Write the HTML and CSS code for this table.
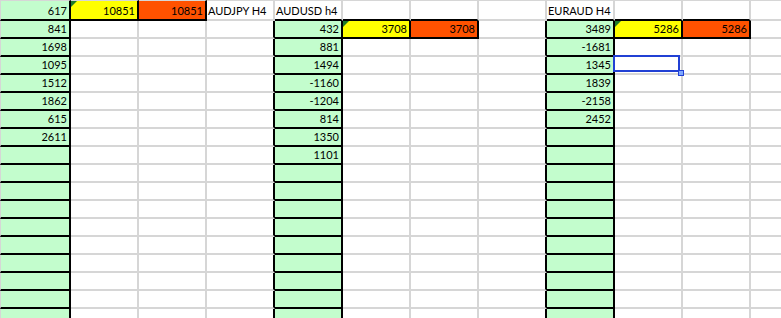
FILE: index.html
```html
<!DOCTYPE html>
<html>
<head>
<meta charset="utf-8">
<link rel="stylesheet" href="styles.css">
</head>
<body>
<div class="sheet">
  <!-- row 1 -->
  <div class="c g">617</div>
  <div class="c y tri bk">10851</div>
  <div class="c o bk">10851</div>
  <div class="c t">AUDJPY H4</div>
  <div class="c t bb">AUDUSD h4</div>
  <div class="c bb"></div>
  <div class="c bb"></div>
  <div class="c"></div>
  <div class="c t bb">EURAUD H4</div>
  <div class="c bb"></div>
  <div class="c bb"></div>
  <div class="c"></div>
  <!-- row 2 -->
  <div class="c g">841</div>
  <div class="c"></div><div class="c"></div>
  <div class="c br"></div>
  <div class="c g">432</div>
  <div class="c y tri bk">3708</div>
  <div class="c o bk">3708</div>
  <div class="c br"></div>
  <div class="c g">3489</div>
  <div class="c y tri bk">5286</div>
  <div class="c o bk">5286</div>
  <div class="c"></div>
  <!-- row 3 -->
  <div class="c g">1698</div>
  <div class="c"></div><div class="c"></div><div class="c br"></div>
  <div class="c g">881</div>
  <div class="c"></div><div class="c"></div><div class="c br"></div>
  <div class="c g">-1681</div>
  <div class="c"></div><div class="c"></div><div class="c"></div>
  <!-- row 4 -->
  <div class="c g">1095</div>
  <div class="c"></div><div class="c"></div><div class="c br"></div>
  <div class="c g">1494</div>
  <div class="c"></div><div class="c"></div><div class="c br"></div>
  <div class="c g">1345</div>
  <div class="c sel"><span class="handle"></span></div><div class="c"></div><div class="c"></div>
  <!-- row 5 -->
  <div class="c g">1512</div>
  <div class="c"></div><div class="c"></div><div class="c br"></div>
  <div class="c g">-1160</div>
  <div class="c"></div><div class="c"></div><div class="c br"></div>
  <div class="c g">1839</div>
  <div class="c"></div><div class="c"></div><div class="c"></div>
  <!-- row 6 -->
  <div class="c g">1862</div>
  <div class="c"></div><div class="c"></div><div class="c br"></div>
  <div class="c g">-1204</div>
  <div class="c"></div><div class="c"></div><div class="c br"></div>
  <div class="c g">-2158</div>
  <div class="c"></div><div class="c"></div><div class="c"></div>
  <!-- row 7 -->
  <div class="c g">615</div>
  <div class="c"></div><div class="c"></div><div class="c br"></div>
  <div class="c g">814</div>
  <div class="c"></div><div class="c"></div><div class="c br"></div>
  <div class="c g">2452</div>
  <div class="c"></div><div class="c"></div><div class="c"></div>
  <!-- row 8 -->
  <div class="c g">2611</div>
  <div class="c"></div><div class="c"></div><div class="c br"></div>
  <div class="c g">1350</div>
  <div class="c"></div><div class="c"></div><div class="c br"></div>
  <div class="c g"></div>
  <div class="c"></div><div class="c"></div><div class="c"></div>
  <!-- row 9 -->
  <div class="c g"></div>
  <div class="c"></div><div class="c"></div><div class="c br"></div>
  <div class="c g">1101</div>
  <div class="c"></div><div class="c"></div><div class="c br"></div>
  <div class="c g"></div>
  <div class="c"></div><div class="c"></div><div class="c"></div>
  <!-- row 10 -->
  <div class="c g"></div>
  <div class="c"></div><div class="c"></div><div class="c br"></div>
  <div class="c g"></div>
  <div class="c"></div><div class="c"></div><div class="c br"></div>
  <div class="c g"></div>
  <div class="c"></div><div class="c"></div><div class="c"></div>
  <!-- row 11 -->
  <div class="c g"></div>
  <div class="c"></div><div class="c"></div><div class="c br"></div>
  <div class="c g"></div>
  <div class="c"></div><div class="c"></div><div class="c br"></div>
  <div class="c g"></div>
  <div class="c"></div><div class="c"></div><div class="c"></div>
  <!-- row 12 -->
  <div class="c g"></div>
  <div class="c"></div><div class="c"></div><div class="c br"></div>
  <div class="c g"></div>
  <div class="c"></div><div class="c"></div><div class="c br"></div>
  <div class="c g"></div>
  <div class="c"></div><div class="c"></div><div class="c"></div>
  <!-- row 13 -->
  <div class="c g"></div>
  <div class="c"></div><div class="c"></div><div class="c br"></div>
  <div class="c g"></div>
  <div class="c"></div><div class="c"></div><div class="c br"></div>
  <div class="c g"></div>
  <div class="c"></div><div class="c"></div><div class="c"></div>
  <!-- row 14 -->
  <div class="c g"></div>
  <div class="c"></div><div class="c"></div><div class="c br"></div>
  <div class="c g"></div>
  <div class="c"></div><div class="c"></div><div class="c br"></div>
  <div class="c g"></div>
  <div class="c"></div><div class="c"></div><div class="c"></div>
  <!-- row 15 -->
  <div class="c g"></div>
  <div class="c"></div><div class="c"></div><div class="c br"></div>
  <div class="c g"></div>
  <div class="c"></div><div class="c"></div><div class="c br"></div>
  <div class="c g"></div>
  <div class="c"></div><div class="c"></div><div class="c"></div>
  <!-- row 16 -->
  <div class="c g"></div>
  <div class="c"></div><div class="c"></div><div class="c br"></div>
  <div class="c g"></div>
  <div class="c"></div><div class="c"></div><div class="c br"></div>
  <div class="c g"></div>
  <div class="c"></div><div class="c"></div><div class="c"></div>
  <!-- row 17 -->
  <div class="c g"></div>
  <div class="c"></div><div class="c"></div><div class="c br"></div>
  <div class="c g"></div>
  <div class="c"></div><div class="c"></div><div class="c br"></div>
  <div class="c g"></div>
  <div class="c"></div><div class="c"></div><div class="c"></div>
  <!-- row 18 -->
  <div class="c g"></div>
  <div class="c"></div><div class="c"></div><div class="c br"></div>
  <div class="c g"></div>
  <div class="c"></div><div class="c"></div><div class="c br"></div>
  <div class="c g"></div>
  <div class="c"></div><div class="c"></div><div class="c"></div>
</div>
</body>
</html>
```
FILE: styles.css
```css
html, body {
  margin: 0;
  padding: 0;
  background: #ffffff;
  overflow: hidden;
}

.sheet {
  display: grid;
  grid-template-columns: 71px repeat(11, 68px);
  grid-template-rows: 21px repeat(17, 18px);
  font-family: Lato, "Liberation Sans", sans-serif;
  font-size: 11px;
  line-height: 16px;
  color: #000;
}

.c {
  box-sizing: border-box;
  position: relative;
  border-right: 2px solid #d6d6d6;
  border-bottom: 2px solid #d6d6d6;
  padding: 0 2px 0 2px;
  text-align: right;
  white-space: nowrap;
  overflow: visible;
}

.sheet > .c:nth-child(-n+12) {
  border-top: 1px solid #d6d6d6;
  padding-top: 2px;
}

.sheet > .c:nth-child(12n+1) {
  border-left: 1px solid #d6d6d6;
}

.t {
  text-align: left;
  padding-left: 1px;
}

.g {
  background: #c3fdcd;
  border-right-color: #000;
  border-bottom-color: #000;
}

.y {
  background: #ffff00;
}

.o {
  background: #ff5200;
}

.bk {
  border-right-color: #000;
  border-bottom-color: #000;
}

.bb {
  border-bottom-color: #000;
}

.br {
  border-right-color: #000;
}

.tri::before {
  content: "";
  position: absolute;
  left: 0;
  top: 0;
  border-top: 6px solid #1d7a2b;
  border-right: 6px solid transparent;
}

.sel::after {
  content: "";
  position: absolute;
  left: -2px;
  top: -2px;
  right: 1px;
  bottom: 1px;
  border: 2px solid #2140d4;
}

.handle {
  position: absolute;
  right: -3px;
  bottom: -3px;
  width: 4px;
  height: 4px;
  background: #7fa8ff;
  border: 1px solid #2140d4;
  z-index: 2;
}
```
